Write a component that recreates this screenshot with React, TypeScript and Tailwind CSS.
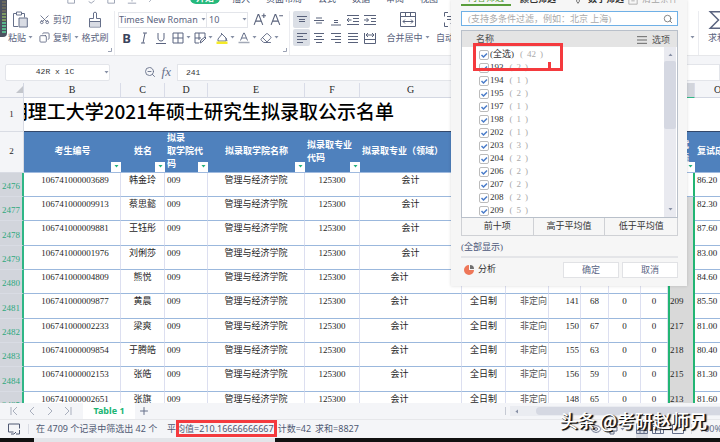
import type { ReactNode } from 'react';
import { Copy, Eraser, Eye, Plus, Scissors, Search, ZoomOut } from 'lucide-react';
import clsx from 'clsx';

interface Candidate {
  row: number;
  id: string;
  name: string;
  scores: [string, string, string, string];
  total: string;
  retest: string;
}

const CANDIDATES: Candidate[] = [
  { row: 2476, id: '106741000003689', name: '韩金玲', scores: ['160', '81', '0', '0'], total: '241', retest: '86.20' },
  { row: 2477, id: '106741000009913', name: '蔡思懿', scores: ['158', '68', '0', '0'], total: '226', retest: '82.30' },
  { row: 2478, id: '106741000009881', name: '王钰彤', scores: ['152', '69', '0', '0'], total: '221', retest: '87.60' },
  { row: 2479, id: '106741000001976', name: '刘俐莎', scores: ['155', '68', '0', '0'], total: '223', retest: '83.00' },
  { row: 2480, id: '106741000004809', name: '熊悦', scores: ['149', '67', '0', '0'], total: '216', retest: '84.60' },
  { row: 2481, id: '106741000009877', name: '黄晨', scores: ['141', '68', '0', '0'], total: '209', retest: '85.50' },
  { row: 2482, id: '106741000002233', name: '梁爽', scores: ['150', '67', '0', '0'], total: '217', retest: '81.00' },
  { row: 2483, id: '106741000009854', name: '于腾皓', scores: ['155', '63', '0', '0'], total: '218', retest: '80.40' },
  { row: 2484, id: '106741000002153', name: '张皓', scores: ['156', '59', '0', '0'], total: '215', retest: '81.30' },
  { row: 2485, id: '106741000002651', name: '张旗', scores: ['148', '65', '0', '0'], total: '213', retest: '81.60' },
];

const FILTER_VALUES = [
  { value: '193', count: 2 },
  { value: '194', count: 1 },
  { value: '195', count: 2 },
  { value: '197', count: 1 },
  { value: '198', count: 1 },
  { value: '202', count: 1 },
  { value: '203', count: 3 },
  { value: '204', count: 2 },
  { value: '206', count: 2 },
  { value: '207', count: 2 },
  { value: '208', count: 2 },
  { value: '209', count: 5 },
];

const UI = "font-['Noto_Sans','Noto_Sans_CJK_SC',sans-serif]";
const SERIF = "font-['Liberation_Serif','Noto_Sans_CJK_SC',serif]";
const MONO = "font-['Liberation_Mono','Noto_Sans_CJK_SC',monospace]";

function Caret({ color = 'text-[#8790a5]', className }: { color?: string; className?: string }) {
  return (
    <svg viewBox="0 0 5 3" className={clsx('h-[3px] w-[5px] shrink-0', color, className)} fill="currentColor">
      <path d="M0.5 0h4L2.5 2.6z" />
    </svg>
  );
}

function Glyph({ d, className = 'size-3' }: { d: string; className?: string }) {
  return (
    <svg viewBox="0 0 12 12" className={clsx('shrink-0', className)} fill="none" stroke="currentColor" strokeWidth="1">
      <path d={d} />
    </svg>
  );
}

function Tool({ label, children, active }: { label: string; children: ReactNode; active?: boolean }) {
  return (
    <button
      aria-label={label}
      className={clsx('flex h-[17px] w-[17px] shrink-0 items-center justify-center', active && 'rounded-xs bg-[#dbdfe6]')}
    >
      {children}
    </button>
  );
}

function Launcher() {
  return (
    <svg viewBox="0 0 4 4" className="size-1 self-end" fill="none" stroke="#9aa1b3">
      <path d="M3.5 0v3.5H0" />
    </svg>
  );
}

function TabStrip() {
  return (
    <div className="flex h-1 items-end overflow-hidden bg-white pl-[67px] text-[9px] leading-[10px] text-[#4b5570]">
      <div className="flex w-[123px] items-end gap-2.5 text-[#8d95a8]">
        <Glyph d="M1 1v10h8V1" className="size-2.5" />
        <Glyph d="M2 9l3 2 4-3" className="size-2.5" />
        <Glyph d="M1 1v10h8V1" className="size-2.5" />
        <Glyph d="M1 11h10M6 1v8" className="size-2.5" />
        <Glyph d="M3 9l3-3" className="size-2" />
      </div>
      <button className="h-4 w-[30px] shrink-0 rounded-md bg-[#26b97c] pt-1 font-bold text-white">开始</button>
      <nav className="flex shrink-0 gap-4 pl-3">
        <button>插入</button>
        <button>页面布局</button>
        <button>公式</button>
        <button>数据</button>
        <button>审阅</button>
        <button>视图</button>
      </nav>
    </div>
  );
}

function Ribbon() {
  return (
    <div className="flex h-[52px] shrink-0 overflow-hidden border-b border-[#e6e7ea] bg-white pt-[7px] text-[9px] text-[#5b6480]">
      <div className="flex w-[115px] shrink-0 border-r border-[#ebecf0] pl-2">
        <button className="flex w-7 flex-col">
          <span className="flex h-[18px] w-full items-center pl-1">
            <svg viewBox="0 0 16 17" className="h-[17px] w-4" fill="none" stroke="#66708a">
              <path d="M4 2.5H1.5v13H6M10 2.5h2.500v4M4.500 1h5v3h-5z" />
              <path d="M7 7h8.300v9H7z" fill="#d9dce4" />
            </svg>
          </span>
          <span className="flex h-[18px] items-center gap-0.5 whitespace-nowrap">粘贴<Caret /></span>
        </button>
        <div className="flex w-[46px] flex-col pl-[3px]">
          <button className="flex h-[18px] items-center gap-[3px] whitespace-nowrap">
            <Scissors className="size-[11px] -rotate-90" strokeWidth={1.8} />
            剪切
          </button>
          <button className="flex h-[18px] items-center gap-[3px] whitespace-nowrap">
            <Copy className="size-[11px] -scale-x-100" strokeWidth={1.8} />
            复制
            <Caret />
          </button>
        </div>
        <button className="flex w-[26px] flex-col items-center">
          <span className="flex h-[18px] items-center">
            <svg viewBox="0 0 14 17" className="h-[17px] w-3.5" fill="none" stroke="#66708a">
              <path d="M5.500 7.500V2c0-1 3-1 3 0v5.500H12.500v8.500H1.500V7.500z" />
              <path d="M2 10.500h10V15.500H2z" fill="#d9dce4" stroke="none" />
              <path d="M1.500 10.500h11" />
            </svg>
          </span>
          <span className="h-[18px] leading-[18px] whitespace-nowrap">格式刷</span>
        </button>
        <div className="flex pb-[3px]"><Launcher /></div>
      </div>

      <div className="flex w-[175px] shrink-0 flex-col border-r border-[#ebecf0] pl-[3px]">
        <div className="flex h-[18px] items-center">
          <div className="flex h-4 w-[130px] shrink-0 items-center border border-[#e3e5ea]">
            <select aria-label="字体" className="w-[82px] shrink-0 appearance-none bg-transparent text-[9px] leading-3">
              <option>Times New Roman</option>
            </select>
            <Caret />
            <select aria-label="字号" className="h-full w-9 appearance-none border-l border-[#e3e5ea] pl-0.5 text-[9px] leading-3">
              <option>10</option>
            </select>
            <Caret />
          </div>
          <button aria-label="增大字号" className="ml-[5px] flex text-[#59627b]">
            <Glyph d="M1 11L4.700 1.500h.6L9 11M2.500 7.500h5M8 2.500h4M10 .5v4" className="size-[13px]" />
          </button>
          <button aria-label="减小字号" className="ml-1 flex text-[#59627b]">
            <Glyph d="M1 11L4.700 1.500h.6L9 11M2.500 7.500h5M8.500 2.500h3.500" className="size-[13px]" />
          </button>
        </div>
        <div className="flex h-[18px] items-center">
          <Tool label="加粗"><b className="text-[13px] leading-4 text-[#3a435c]">B</b></Tool>
          <Tool label="倾斜"><Glyph d="M5 1h4M3 11h4M7 1L5 11" /></Tool>
          <Tool label="下划线"><Glyph d="M3 1v5c0 4 6 4 6 0V1M1 11.500h10" /></Tool>
          <Tool label="边框"><Glyph d="M1 1h10v10H1zM6 1v10M1 6h10" /></Tool>
          <Caret />
          <Tool label="绘图边框"><Glyph d="M11 5V1H1v10h4M5 1v7M1 6h6M6 11l1-3 4-3 1 1-4 4z" /></Tool>
          <Caret />
          <Tool label="填充颜色">
            <svg viewBox="0 0 12 12" className="size-3" fill="none" stroke="#66708a">
              <path d="M2 7L6 2l4 4v3H2zM5 1l2 2M10 6l1 3" />
              <path d="M.5 9.500h11v2.500H.5z" fill="#f5ea29" stroke="none" />
            </svg>
          </Tool>
          <Caret />
          <Tool label="字体颜色">
            <svg viewBox="0 0 12 12" className="size-3" fill="none" stroke="#66708a">
              <path d="M2.500 8.500L5.700 1h.6l3.200 7.500M3.700 6h4.600" />
              <path d="M.5 10.500h11" strokeWidth="1.500" stroke="#a3a9b7" />
            </svg>
          </Tool>
          <Caret />
          <Tool label="清除"><Eraser className="size-3" strokeWidth={1.8} /></Tool>
          <Caret />
        </div>
        <div className="flex grow justify-end pr-0.5 pb-[3px]"><Launcher /></div>
      </div>

      <div className="flex shrink-0 flex-col pl-[3px] text-[#59627b]">
        <div className="flex h-[18px] items-center">
          <Tool label="顶端对齐" active><Glyph d="M1 2.500h10M3 5.500h6M3 7.500h6" /></Tool>
          <Tool label="垂直居中"><Glyph d="M3 4h6M1 6.500h10M3 9h6" /></Tool>
          <Tool label="底端对齐"><Glyph d="M4 6.500h4M4 8.500h4M1 11h10" /></Tool>
          <Tool label="减少缩进"><Glyph d="M0 1.500h12M6 4.500h6M6 7.500h6M0 10.500h12M4.500 6H0M2 4L0 6l2 2" /></Tool>
          <Tool label="增加缩进"><Glyph d="M0 1.500h12M7 4.500h5M7 7.500h5M0 10.500h12M0 6h4.500M2.500 4l2 2-2 2" /></Tool>
        </div>
        <div className="flex h-[18px] items-center">
          <Tool label="左对齐" active><Glyph d="M1 1.500h10M1 4.500h6M1 7.500h10M1 10.500h6" /></Tool>
          <Tool label="居中"><Glyph d="M1 1.500h10M3 4.500h6M1 7.500h10M3 10.500h6" /></Tool>
          <Tool label="右对齐"><Glyph d="M1 1.500h10M5 4.500h6M1 7.500h10M5 10.500h6" /></Tool>
          <Tool label="两端对齐"><Glyph d="M1 1.500h10M1 4.500h10M1 7.500h10M1 10.500h10" /></Tool>
          <Tool label="分散对齐"><Glyph d="M.5 1v10.500h11V1M2 3h8M4 1L2 3l2 2M8 1l2 2-2 2M1 7.500h10" /></Tool>
        </div>
      </div>

      <button className="ml-2.5 flex w-10 shrink-0 flex-col items-center">
        <span className="flex h-[18px] items-center">
          <svg viewBox="0 0 16 15" className="h-[15px] w-4" fill="none" stroke="#59627b">
            <path d="M.5 .5h15v14H.5zM.5 4.500h15M5.500 .5v4M10.500 .5v4M3 9.500h10M5 7.500l-2 2 2 2M11 7.500l2 2-2 2" />
          </svg>
        </span>
        <span className="flex h-[18px] items-center gap-0.5 whitespace-nowrap">合并居中<Caret /></span>
      </button>
      <button className="ml-2 flex w-9 shrink-0 flex-col items-center">
        <span className="flex h-[18px] items-center">
          <svg viewBox="0 0 20 15" className="h-[15px] w-5" fill="none" stroke="#59627b">
            <path d="M4 .5H.5v4M.5 10.500v4H4M7 .5h4M3 4.500h10M3 7.500h10v4H7M9 9.500l-2 2 2 2" />
          </svg>
        </span>
        <span className="h-[18px] leading-[18px] whitespace-nowrap">自动换行</span>
      </button>

      <div className="ml-auto flex w-[33px] shrink-0">
        <div className="flex w-3 shrink-0 flex-col border-r border-[#ebecf0] pt-[25px] pl-[3px]"><Caret /></div>
        <button className="flex shrink-0 flex-col items-start pl-[9px]">
          <Glyph d="M11 3V.5H1.500L7 6l-5.500 5.500H11V9" className="size-[18px]" />
          <span className="h-[18px] leading-[18px] whitespace-nowrap">求和</span>
        </button>
      </div>
    </div>
  );
}

function FormulaBar() {
  return (
    <div className="flex h-[27px] shrink-0 items-end bg-[#f4f5f8] pb-0.5 pl-[5px]">
      <div className="flex h-[17px] w-[105px] shrink-0 items-center rounded-xs border border-[#e3e5ea] bg-white pr-0.5">
        <input aria-label="名称框" readOnly value="42R x 1C" className={clsx(MONO, 'w-[98px] text-center text-[8px] text-[#333]')} />
        <Caret />
      </div>
      <div className="flex h-[17px] w-[67px] shrink-0 items-center justify-end gap-1.5 pr-1.5 text-[#66708a]">
        <ZoomOut className="size-3" strokeWidth={1.8} />
        <i className="font-['Liberation_Serif',serif] text-[13px] leading-4">fx</i>
      </div>
      <input
        aria-label="编辑栏"
        readOnly
        value="241"
        className={clsx(MONO, 'h-[17px] min-w-0 grow border border-[#e3e5ea] bg-white pl-2 text-[8px] text-[#333]')}
      />
    </div>
  );
}

function FilterButton() {
  return (
    <button aria-label="筛选" className="absolute right-0 bottom-0 flex size-2.5 items-center justify-center bg-white">
      <Caret color="text-[#22b07d]" />
    </button>
  );
}

function HeadCell({ children, align = 'text-center', filter = true }: { children?: ReactNode; align?: string; filter?: boolean }) {
  return (
    <td className={clsx('relative h-[41px] border-b border-[#9fbadf] bg-[#4f81bd] leading-[13px] font-bold text-white', align)}>
      {children}
      {filter && <FilterButton />}
    </td>
  );
}

function Cell({ children, className }: { children: ReactNode; className?: string }) {
  return (
    <td className={clsx('border-r border-b border-r-[#dcdff0] border-b-[#9bb8dd] pt-px align-top leading-3 whitespace-nowrap', className)}>
      {children}
    </td>
  );
}

function Sheet() {
  return (
    <div className="min-h-0 grow overflow-hidden bg-white">
      <table className={clsx(SERIF, 'w-full min-w-[741px] table-fixed border-separate border-spacing-0 text-[9px] text-[#262626]')}>
        <colgroup>
          <col className="w-6" />
          <col className="w-[97px]" />
          <col className="w-11" />
          <col className="w-[43px]" />
          <col className="w-[97px]" />
          <col className="w-[55px]" />
          <col className="w-[102px]" />
          <col className="w-11" />
          <col className="w-[43px]" />
          <col className="w-8" />
          <col className="w-7" />
          <col className="w-8" />
          <col className="w-[27px]" />
          <col className="w-[27px]" />
          <col />
        </colgroup>
        <thead>
          <tr className="h-[15px] bg-[#f4f5f8] text-[10px] leading-3">
            <th className="border-r border-b border-[#d3d7e2]">
              <svg viewBox="0 0 7 7" className="ml-auto size-[7px]" fill="#c3c6cc"><path d="M7 0v7H0z" /></svg>
            </th>
            {'BCDEFGHIJKLMNO'.split('').map((letter) => (
              <th
                key={letter}
                className={clsx(
                  'border-r border-b border-r-[#d9dce8] p-0 font-normal',
                  letter === 'N' ? 'border-b-[#2fb686] bg-[#d2d5dc]' : 'border-b-[#d3d7e2]',
                )}
              >
                {letter}
              </th>
            ))}
          </tr>
        </thead>
        <tbody>
          <tr>
            <th className="h-[34px] border-r border-b border-[#d9dce4] bg-[#f4f5f8] font-normal">1</th>
            <td colSpan={14} className="border-b border-[#33486b] p-0">
              <div className="flex w-[370px] justify-end overflow-hidden pb-1.5 font-['Noto_Sans_CJK_SC',sans-serif] text-[19px] leading-6 font-medium whitespace-nowrap text-black">
                昆明理工大学2021年硕士研究生拟录取公示名单
              </div>
            </td>
          </tr>
          <tr>
            <th className="border-r border-b border-[#d9dce4] bg-[#f4f5f8] font-normal">2</th>
            <HeadCell>考生编号</HeadCell>
            <HeadCell>姓名</HeadCell>
            <HeadCell align="pl-0.5 text-left">拟录<br />取学院代码</HeadCell>
            <HeadCell>拟录取学院名称</HeadCell>
            <HeadCell align="pl-0.5 text-left">拟录取专业代码</HeadCell>
            <HeadCell align="pl-0.5 text-left whitespace-nowrap">拟录取专业（领域）</HeadCell>
            <HeadCell>学习方式</HeadCell>
            <HeadCell>就业类型</HeadCell>
            <HeadCell>初试</HeadCell>
            <HeadCell>初试</HeadCell>
            <HeadCell>初试</HeadCell>
            <HeadCell>初试</HeadCell>
            <HeadCell align="pl-[3px] text-left">初试成绩</HeadCell>
            <HeadCell align="pl-0.5 text-left whitespace-nowrap" filter={false}>复试成绩</HeadCell>
          </tr>
          {CANDIDATES.map((c, i) => (
            <tr key={c.row} className="h-6 nth-[3n+2]:h-[25px]">
              <th className="border-r-2 border-b border-r-[#2fb686] border-b-[#d9dce4] bg-[#d2d5dc] p-0 pt-1 leading-3 font-normal text-[#2fa87d]">
                {c.row}
              </th>
              <Cell className="pl-1.5 text-center">{c.id}</Cell>
              <Cell className="text-center">{c.name}</Cell>
              <Cell className="pl-0.5">009</Cell>
              <Cell className="text-center">管理与经济学院</Cell>
              <Cell className="text-center">125300</Cell>
              <Cell className={clsx('text-center', i >= 4 && 'pr-[22px]')}>会计</Cell>
              <Cell className="text-center">全日制</Cell>
              <Cell className="pr-px text-right text-[#555]">非定向</Cell>
              <Cell className="pr-px text-right">{c.scores[0]}</Cell>
              <Cell className="text-center">{c.scores[1]}</Cell>
              <Cell className="text-center">{c.scores[2]}</Cell>
              <Cell className="text-center">{c.scores[3]}</Cell>
              <td
                className={clsx(
                  'border-x-2 border-x-[#22b573] pt-px align-top leading-3',
                  i === 0 ? 'border-b border-b-[#9bb8dd] bg-white' : 'bg-[#d9d9d9]',
                )}
              >
                {c.total}
              </td>
              <Cell className="pl-0.5">{c.retest}</Cell>
            </tr>
          ))}
        </tbody>
      </table>
    </div>
  );
}

function FilterItem({ label, count }: { label: string; count: number }) {
  return (
    <label className="flex h-[13px] items-center leading-[13px] text-[#333]">
      <span className="relative mr-px flex size-2.5">
        <input type="checkbox" defaultChecked className="peer size-2.5 appearance-none rounded-xs border border-[#bcbcbc] bg-white" />
        <svg viewBox="0 0 10 10" className="pointer-events-none absolute inset-0 hidden size-2.5 peer-checked:block" fill="none" stroke="#4a7cc9" strokeWidth="1.500">
          <path d="M2.500 5l2 2 3.500-3.500" />
        </svg>
      </span>
      {label}
      <span className="ml-1.5 flex gap-1 text-[#aaa]">
        <span>(</span>
        <span>{count}</span>
        <span>)</span>
      </span>
    </label>
  );
}

function FilterPopup() {
  return (
    <section className={clsx(SERIF, 'absolute top-0 right-[33px] flex h-[286px] w-[236px] flex-col bg-[#f6f6f6] pr-[9px] pl-2.5 text-[9px] text-[#333] shadow-[0_0_3px_rgba(0,0,0,0.15)]')}>
      <div className="flex h-1.5 shrink-0 items-end overflow-hidden leading-[13px] whitespace-nowrap">
        <button className="w-[50px] shrink-0 border-b-2 border-[#5a9e3c] leading-[11px] text-[#5a9e3c]">内容筛选</button>
        <button className="ml-[9px] font-bold">颜色筛选</button>
        <button className="ml-auto flex items-center gap-1.5 font-bold">
          <Glyph d="M4 0v8l2 3 2-3V0" className="size-2" />
          数字筛选
        </button>
        <button className="ml-1 flex items-center gap-1 text-[#a5a5a5]">
          <Glyph d="M1 1v10h10V1M4 7h4" className="size-2.5" />
          清空条件
        </button>
      </div>

      <div className="mt-[5px] flex h-[15px] shrink-0 items-center border border-[#6fb0e6] bg-white px-1">
        <input aria-label="搜索" placeholder="(支持多条件过滤，例如：北京 上海)" className="min-w-0 grow pl-0.5 text-[9px] leading-3 placeholder:text-[#aaa]" />
        <Search className="size-2.5 text-[#707070]" strokeWidth={2} />
      </div>

      <div className="mt-1 flex h-[188px] shrink-0 flex-col border border-[#b9c0ca] bg-white">
        <div className="flex h-4 shrink-0 items-center bg-[#e4e4e4] pt-0.5 pr-[7px] pl-3.5 text-[#4f4f4f]">
          名称
          <button className="ml-auto flex items-center gap-[5px] leading-3">
            <Glyph d="M0 2h12M0 6h12M0 10h12" className="size-2.5" />
            选项
          </button>
        </div>
        <div className="flex min-h-0 grow">
          <div className="grow overflow-hidden pt-px pl-[17px]">
            <FilterItem label="(全选)" count={42} />
            {FILTER_VALUES.map((item) => (
              <FilterItem key={item.value} label={item.value} count={item.count} />
            ))}
          </div>
          <div className="mr-px flex w-3 flex-col items-center bg-[#e9eaf0]">
            <Caret className="mt-1.5 rotate-180" />
            <div className="mt-[5px] h-[68px] w-full rounded-xs bg-[#d5d8e2]" />
            <Caret className="mt-auto mb-1.5" />
          </div>
        </div>
      </div>

      <div className="grid h-[18px] shrink-0 grid-cols-3 divide-x divide-[#cfd1d5] border-x border-b border-[#cfd1d5]">
        <button>前十项</button>
        <button>高于平均值</button>
        <button>低于平均值</button>
      </div>
      <div className="mt-[5px] h-[15px] shrink-0 leading-[13px] text-[#4d587a]">(全部显示)</div>
      <div className="h-0.5 shrink-0 bg-[#e4e5e8]" />
      <div className="mt-1 flex h-4 shrink-0 items-center gap-[3px]">
        <button className="mr-auto flex items-center gap-1 pl-[3px]">
          <svg viewBox="0 0 10 10" className="size-2.5">
            <path d="M5 0a5 5 0 1 0 5 5H5z" fill="#ee7759" />
            <path d="M6 0a4 4 0 0 1 4 4H6z" fill="#707070" />
          </svg>
          分析
        </button>
        <button className="h-4 w-14 border border-[#e1e2e5] bg-white leading-3 text-[#5b6685]">确定</button>
        <button className="h-4 w-14 border border-[#e1e2e5] bg-white leading-3 text-[#5b6685]">取消</button>
      </div>

      <div className="pointer-events-none absolute top-[43px] left-[22px] h-[28px] w-[90px] border-3 border-[#f43a3e]">
        <div className="absolute right-[9px] bottom-0 h-1.5 w-[3px] bg-[#f43a3e]" />
      </div>
    </section>
  );
}

function SheetTabs() {
  return (
    <div className="flex h-4 shrink-0 items-center bg-[#f4f5f8] pl-2 text-[#a9afbd]">
      <div className="flex w-[75px] gap-1.5">
        <button aria-label="第一张"><Glyph d="M3 2v8M9 2L5 6l4 4" /></button>
        <button aria-label="上一张"><Glyph d="M8 2L4 6l4 4" /></button>
        <button aria-label="下一张"><Glyph d="M4 2l4 4-4 4" /></button>
        <button aria-label="最后一张"><Glyph d="M3 2l4 4-4 4M9 2v8" /></button>
      </div>
      <button className="h-full w-[52px] bg-white text-[9px] leading-4 font-bold text-[#20b573]">Table 1</button>
      <button aria-label="新建工作表" className="ml-[3px] text-[#66708a]"><Plus className="size-3" strokeWidth={2} /></button>
      <div className="ml-auto flex h-2.5 w-[215px] items-center">
        <span className="h-2 w-px bg-[#c6cad4]" />
        <div className="ml-1 flex h-full grow items-center bg-[#eaecf1] pl-1">
          <Caret className="rotate-90" />
          <div className="ml-[17px] h-2 grow rounded-l-full bg-[#d5d8e2]" />
        </div>
      </div>
    </div>
  );
}

function StatusBar() {
  return (
    <footer className="flex h-[19px] shrink-0 items-center border-t border-[#e6e7ea] bg-[#f4f5f8] pl-2 text-[9px] whitespace-nowrap text-[#4f5973]">
      <Glyph d="M11.500 5.500V1H.5v8h5M3 11h3M11.500 7v4H8M8 9l-2 2" className="size-3" />
      <span className="ml-2 h-2.5 w-px bg-[#d9dce4]" />
      <span className="ml-[7px] w-[131px]">在 4709 个记录中筛选出 42 个</span>
      <span className="relative">
        平均值=210.16666666667
        <span className="pointer-events-none absolute -top-0.5 -right-[3px] left-[9px] h-[17px] border-3 border-[#f43a3e]" />
      </span>
      <span className="ml-1">计数=42</span>
      <span className="ml-1">求和=8827</span>
      <div className="ml-auto flex w-[130px] shrink-0 items-center overflow-hidden text-[#66708a]">
        <button aria-label="护眼模式"><Eye className="size-3" strokeWidth={1.8} /></button>
        <button aria-label="阅读模式" className="ml-1 flex items-center gap-0.5">
          <Glyph d="M4 1h4v3h3v4H8v3H4V8H1V4h3z" />
          <Caret />
        </button>
        <button aria-label="普通视图" className="ml-[11px] flex h-[17px] w-[15px] items-center justify-center bg-[#d9dce4]">
          <Glyph d="M.5 1.500h11v9H.5zM.5 4.500h11M.5 7.500h11M4 1v10M8 1v10" />
        </button>
        <button aria-label="分页预览" className="ml-1"><Glyph d="M.5 1.500h11v9H.5zM.5 3.500h11M3.500 4v7M8.500 4v7M3.500 7h5" /></button>
        <button aria-label="页面布局" className="ml-2"><Glyph d="M.5 1.500h11v9H.5zM4 1v4h4" /></button>
        <span className="mx-[7px] h-2.5 w-px shrink-0 bg-[#d9dce4]" />
        100%
      </div>
    </footer>
  );
}

export default function App() {
  return (
    <div className={clsx(UI, 'relative flex h-screen flex-col overflow-hidden bg-[#f4f5f8]')}>
      <TabStrip />
      <Ribbon />
      <FormulaBar />
      <Sheet />
      <SheetTabs />
      <StatusBar />
      <div className="flex h-1 shrink-0">
        <div className="w-[34px] bg-[#111]" />
        <div className="w-[241px] bg-[#e3e5e9]" />
        <div className="grow bg-[#111]" />
      </div>

      <FilterPopup />

      {/* recorder level meter docked at the left edge */}
      <div className="absolute top-0 left-0 flex h-[37px] w-[7px] flex-col items-center gap-px rounded-br-sm bg-[#4c5260] pt-px">
        {Array.from({ length: 11 }, (_, i) => (
          <span key={i} className={clsx('h-0.5 w-1', i < 4 ? 'bg-[#6b6a5c]' : i < 7 ? 'bg-[#7d9a62]' : 'bg-[#58b58c]')} />
        ))}
      </div>

      <div className="pointer-events-none absolute right-[13px] bottom-2.5 font-['Noto_Sans_CJK_SC',sans-serif] text-[18px] leading-6 font-medium whitespace-nowrap text-white [text-shadow:1px_1px_0_#111,2px_1px_1px_#111]">
        头条 @考研赵师兄
      </div>
    </div>
  );
}
